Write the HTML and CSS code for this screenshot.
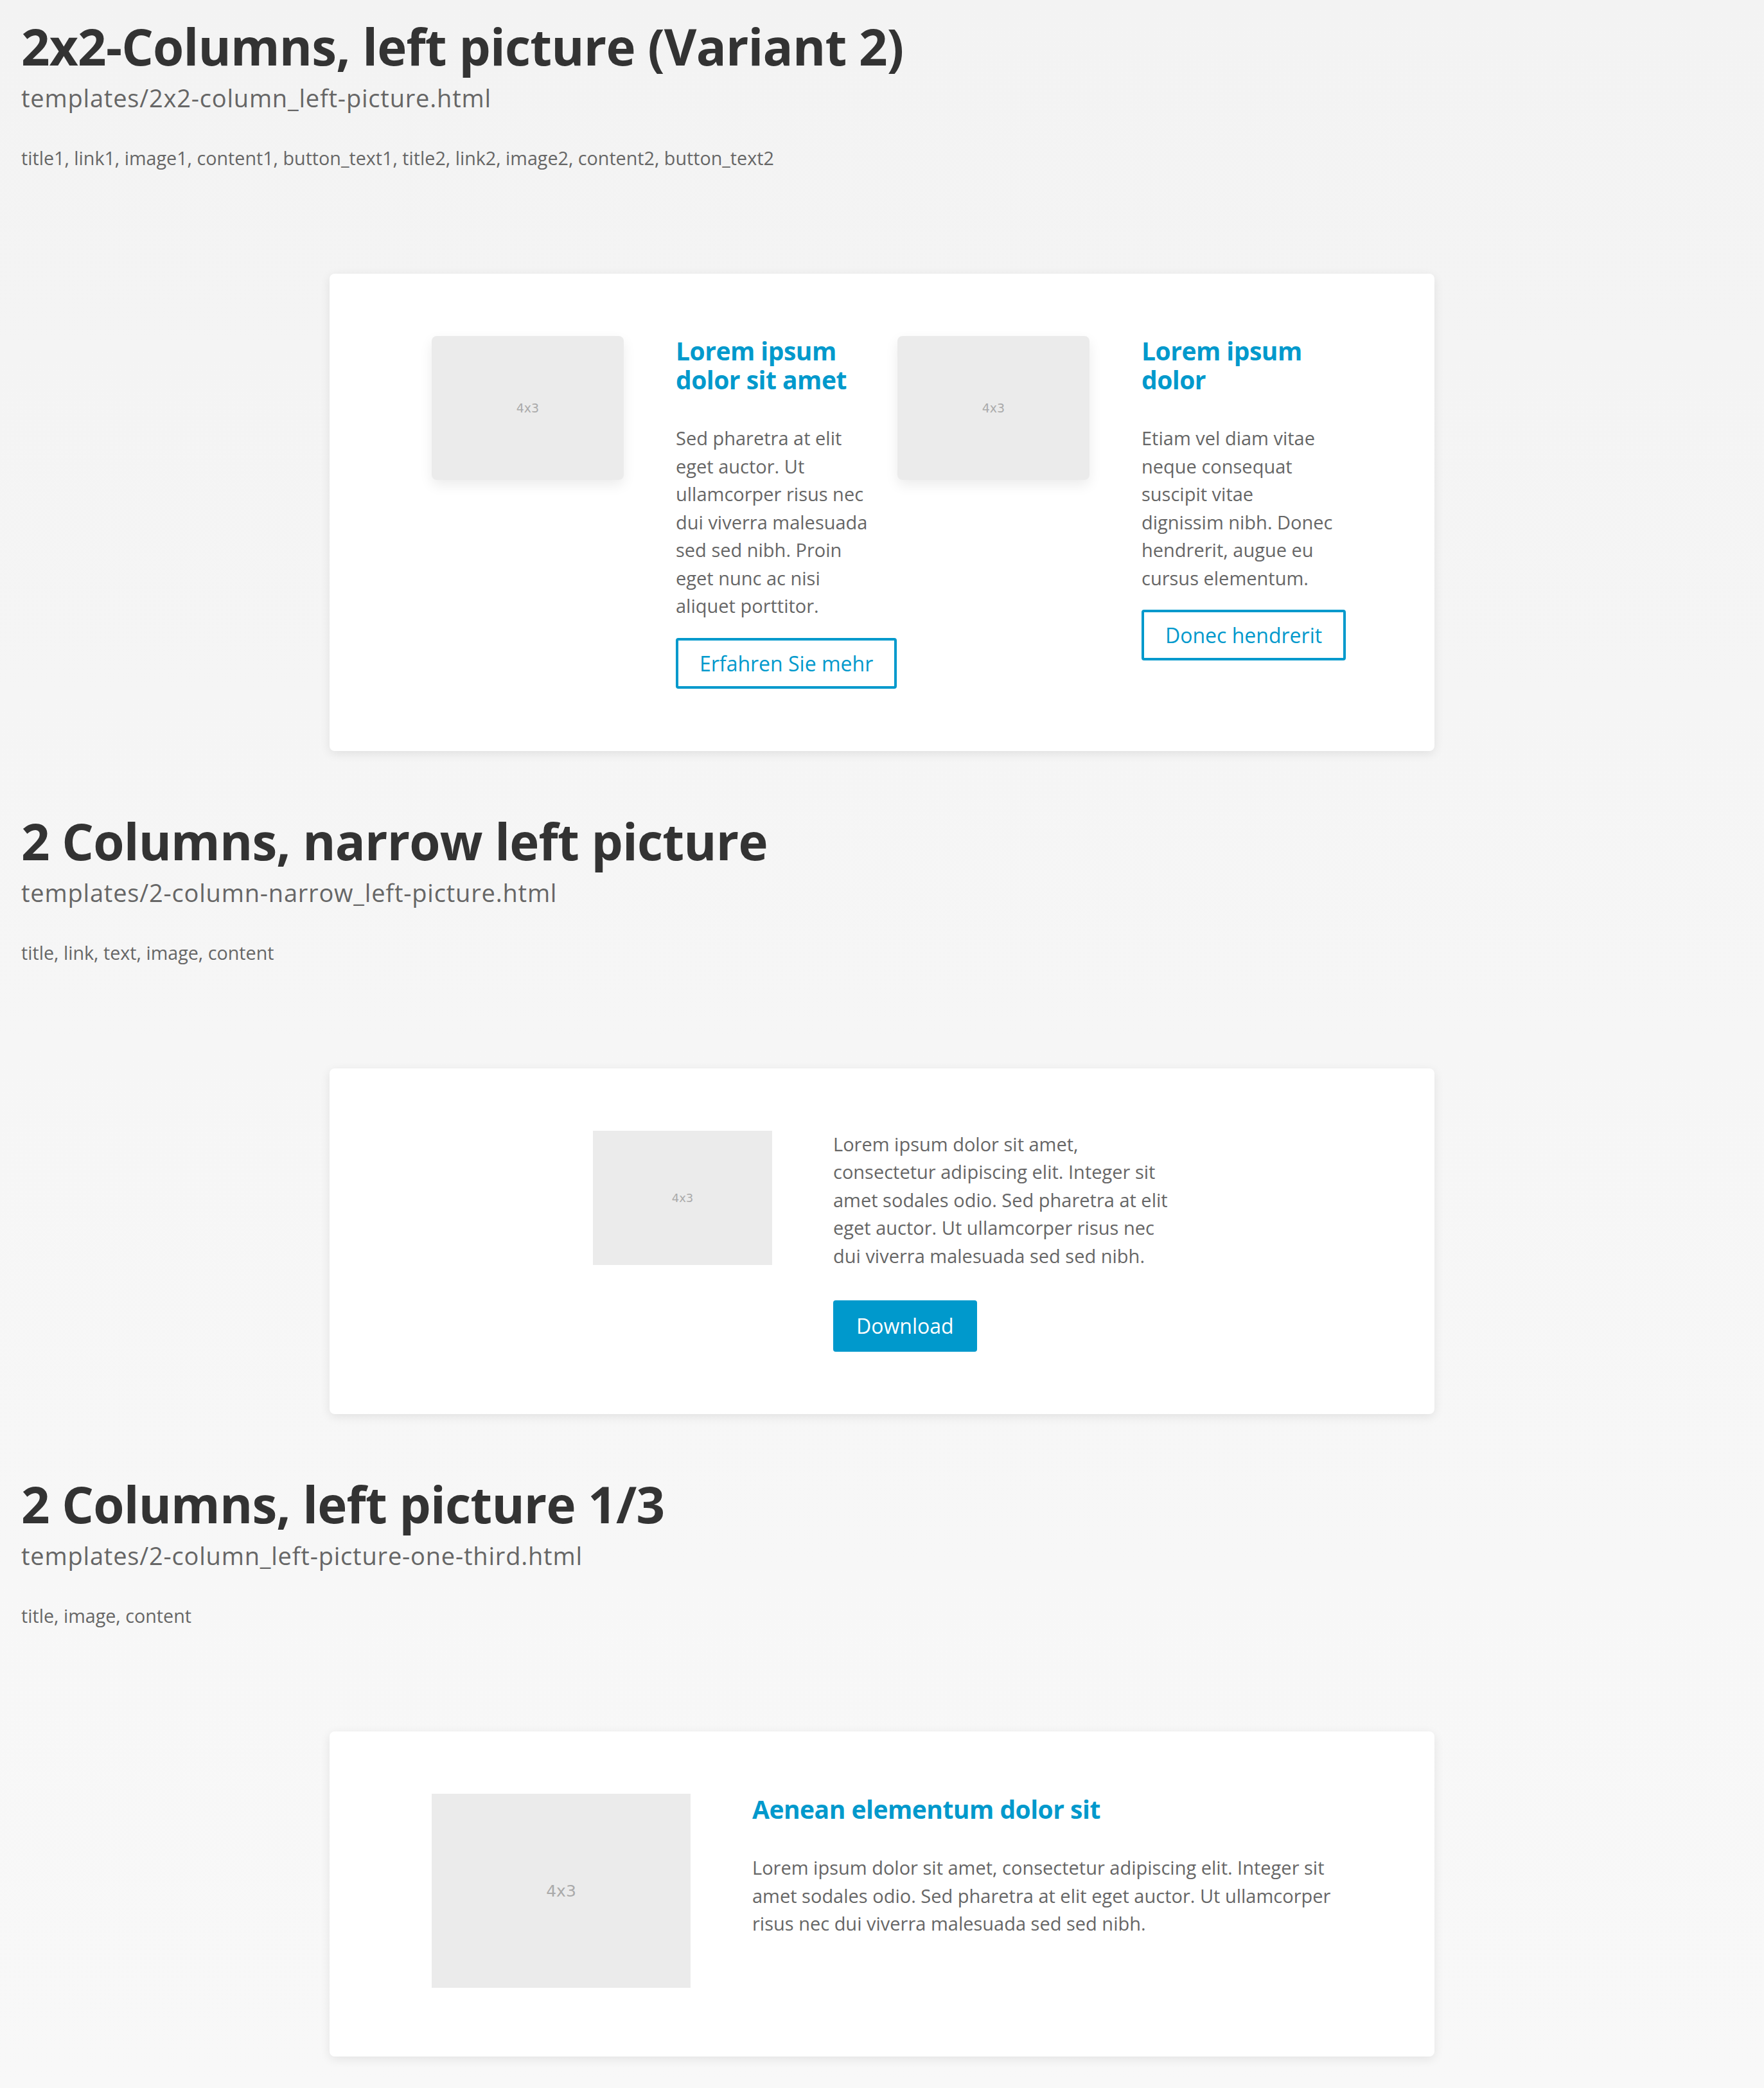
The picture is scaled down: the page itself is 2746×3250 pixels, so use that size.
FILE: index.html
```html
<!DOCTYPE html>
<html lang="de">
<head>
<meta charset="utf-8">
<title>Templates</title>
<link rel="stylesheet" href="styles.css">
</head>
<body>
<main class="page">

  <section class="section">
    <h1 class="sec-title">2x2-Columns, left picture (Variant 2)</h1>
    <p class="sec-path">templates/2x2-column_left-picture.html</p>
    <p class="sec-fields">title1, link1, image1, content1, button_text1, title2, link2, image2, content2, button_text2</p>
    <div class="card">
      <div class="grid-2x2">
        <div class="item">
          <div class="ph ph-shadow ph-s"><span>4x3</span></div>
          <div class="item-text">
            <h2 class="item-title">Lorem ipsum dolor sit amet</h2>
            <p class="body">Sed pharetra at elit eget auctor. Ut ullamcorper risus nec dui viverra malesuada sed sed nibh. Proin eget nunc ac nisi aliquet porttitor.</p>
            <a class="btn-outline" href="#">Erfahren Sie mehr</a>
          </div>
        </div>
        <div class="item">
          <div class="ph ph-shadow ph-s"><span>4x3</span></div>
          <div class="item-text">
            <h2 class="item-title">Lorem ipsum dolor</h2>
            <p class="body">Etiam vel diam vitae neque consequat suscipit vitae dignissim nibh. Donec hendrerit, augue eu cursus elementum.</p>
            <a class="btn-outline" href="#">Donec hendrerit</a>
          </div>
        </div>
      </div>
    </div>
  </section>

  <section class="section">
    <h1 class="sec-title">2 Columns, narrow left picture</h1>
    <p class="sec-path">templates/2-column-narrow_left-picture.html</p>
    <p class="sec-fields">title, link, text, image, content</p>
    <div class="card">
      <div class="narrow">
        <div class="ph ph-n"><span>4x3</span></div>
        <div class="narrow-text">
          <p class="body">Lorem ipsum dolor sit amet, consectetur adipiscing elit. Integer sit amet sodales odio. Sed pharetra at elit eget auctor. Ut ullamcorper risus nec dui viverra malesuada sed sed nibh.</p>
          <a class="btn-fill" href="#">Download</a>
        </div>
      </div>
    </div>
  </section>

  <section class="section">
    <h1 class="sec-title">2 Columns, left picture 1/3</h1>
    <p class="sec-path">templates/2-column_left-picture-one-third.html</p>
    <p class="sec-fields">title, image, content</p>
    <div class="card">
      <div class="third">
        <div class="ph ph-l"><span>4x3</span></div>
        <div class="third-text">
          <h2 class="item-title">Aenean elementum dolor sit</h2>
          <p class="body">Lorem ipsum dolor sit amet, consectetur adipiscing elit. Integer sit amet sodales odio. Sed pharetra at elit eget auctor. Ut ullamcorper risus nec dui viverra malesuada sed sed nibh.</p>
        </div>
      </div>
    </div>
  </section>

</main>
</body>
</html>
```
FILE: styles.css
```css
html, body {
  margin: 0;
  padding: 0;
}

body {
  background: linear-gradient(180deg, #f3f3f3 0%, #f6f6f6 50%, #f8f8f8 100%);
  min-height: 3250px;
  font-family: "Open Sans", "Liberation Sans", sans-serif;
  color: #666;
}

.page {
  padding: 24px 33px 50px;
}

.section + .section {
  margin-top: 92px;
}

.sec-title {
  margin: 0;
  font-family: "Open Sans", "Liberation Sans", sans-serif;
  font-weight: 700;
  font-size: 78px;
  line-height: 96px;
  color: #333;
  letter-spacing: -0.8px;
}

.sec-path {
  margin: 10px 0 0;
  font-size: 38px;
  line-height: 44px;
  letter-spacing: 0.8px;
  color: #666;
}

.sec-fields {
  margin: 51px 0 0;
  font-size: 28.7px;
  line-height: 42px;
  color: #666;
}

.card {
  width: 1720px;
  box-sizing: border-box;
  margin: 159px auto 0;
  background: #fff;
  border-radius: 8px;
  box-shadow: 0 4px 16px rgba(0, 0, 0, 0.09);
  padding: 97px 159px 97px;
}

.ph {
  background: #ebebeb;
  display: flex;
  align-items: center;
  justify-content: center;
  flex: none;
  font-family: "DejaVu Sans", sans-serif;
  color: #aaa;
}

.ph-shadow {
  border-radius: 8px;
  box-shadow: 0 8px 20px rgba(0, 0, 0, 0.08);
}

.ph-s {
  width: 299px;
  height: 224px;
  font-size: 19px;
}

.ph-n {
  width: 279px;
  height: 209px;
  font-size: 18px;
}

.ph-l {
  width: 403px;
  height: 302px;
  font-size: 25px;
  margin-bottom: 10px;
}

.grid-2x2 {
  display: flex;
  gap: 45px;
}

.item {
  display: flex;
  align-items: flex-start;
  gap: 81px;
}

.item-text {
  width: 300px;
  flex: none;
}

.item-title {
  margin: 0;
  font-family: "Open Sans", "Liberation Sans", sans-serif;
  font-weight: 700;
  font-size: 39px;
  line-height: 45px;
  color: #0099cc;
  letter-spacing: -0.5px;
}

.body {
  margin: 0;
  font-size: 29px;
  line-height: 43.5px;
  color: #666;
}

.item-title + .body {
  margin-top: 47px;
}

.btn-outline {
  display: inline-block;
  margin-top: 28px;
  border: 4px solid #0099cc;
  border-radius: 4px;
  padding: 13px 33px;
  font-size: 32px;
  line-height: 45px;
  color: #0099cc;
  text-decoration: none;
  white-space: nowrap;
}

.narrow {
  width: 900px;
  margin: 0 auto;
  display: flex;
  align-items: flex-start;
  gap: 95px;
}

.narrow-text {
  width: 526px;
  flex: none;
  margin-top: -1px;
}

.btn-fill {
  display: inline-block;
  margin-top: 48px;
  background: #0099cc;
  border-radius: 4px;
  padding: 17px 36px;
  font-size: 32px;
  line-height: 46px;
  color: #fff;
  text-decoration: none;
}

.third {
  display: flex;
  align-items: flex-start;
  gap: 96px;
}

.third-text {
  width: 902px;
  flex: none;
  margin-top: 1px;
}
```
